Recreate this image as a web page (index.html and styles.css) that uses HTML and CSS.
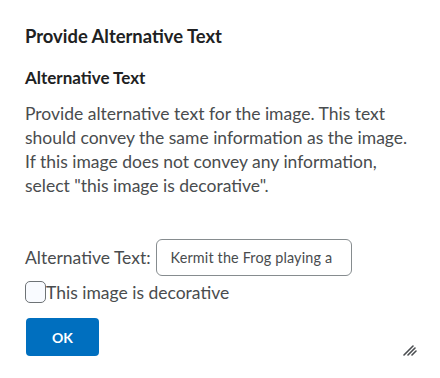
FILE: index.html
```html
<!DOCTYPE html>
<html lang="en">
<head>
    <meta charset="UTF-8">
    <title>Provide Alternative Text</title>
    <link rel="stylesheet" href="styles.css">
</head>
<body>
    <div class="dialog">
        <h1 class="dialogTitle">Provide Alternative Text</h1>
        <h2 class="sectionTitle">Alternative Text</h2>
        <p class="helpText">Provide alternative text for the image. This text should convey the same information as the image. If this image does not convey any information, select "this image is decorative".</p>

        <div class="fieldRow">
            <label for="altText">Alternative Text:</label>
            <input type="text" id="altText" value="Kermit the Frog playing a banjo">
        </div>

        <label class="checkRow">
            <span class="checkBox"></span>This image is decorative
        </label>

        <button class="okButton">OK</button>

        <svg class="resizeHandle" width="14" height="12" viewBox="0 0 14 12">
            <path d="M1 11 L10 2 M5 11 L12 4 M9 11 L13 7" stroke="#4a4d50" stroke-width="1.6" stroke-linecap="round"/>
        </svg>
    </div>
</body>
</html>
```

FILE: styles.css
```css
body {
    margin: 0;
    padding: 0;
    background-color: #fff;
    font-family: Lato, "Open Sans", sans-serif;
    color: #494c4e;
}

.dialog {
    position: relative;
    height: 378px;
    padding: 24px 25px 0 25px;
    box-sizing: border-box;
}

.dialogTitle {
    margin: 0;
    font-size: 18.4px;
    line-height: 24px;
    font-weight: 700;
    color: #202122;
}

.sectionTitle {
    margin: 18px 0 0 0;
    font-size: 17px;
    line-height: 24px;
    font-weight: 700;
    color: #202122;
}

.helpText {
    margin: 12px 0 0 0;
    width: 395px;
    font-size: 17.5px;
    line-height: 24px;
}

.fieldRow {
    display: flex;
    align-items: center;
    gap: 5px;
    margin-top: 41px;
    font-size: 17.5px;
}

.fieldRow input {
    width: 196px;
    height: 37px;
    box-sizing: border-box;
    padding: 0 18px 0 14px;
    border: 1px solid #868c8f;
    border-radius: 6px;
    font-family: Lato, sans-serif;
    font-size: 14.4px;
    letter-spacing: 0.15px;
    color: #494c4e;
}

.checkRow {
    display: flex;
    align-items: center;
    margin-top: 5px;
    height: 22px;
    font-size: 17.5px;
}

.checkBox {
    width: 19px;
    height: 20px;
    border: 1px solid #6e7376;
    border-radius: 5px;
    background-color: #f9fbff;
}

.okButton {
    display: block;
    margin: 15px 0 0 1px;
    width: 73px;
    height: 38px;
    border: none;
    border-radius: 4px;
    background-color: #006fbf;
    color: #fff;
    font-family: Lato, sans-serif;
    font-size: 14px;
    font-weight: 700;
}

.resizeHandle {
    position: absolute;
    right: 23px;
    bottom: 22px;
}
```
